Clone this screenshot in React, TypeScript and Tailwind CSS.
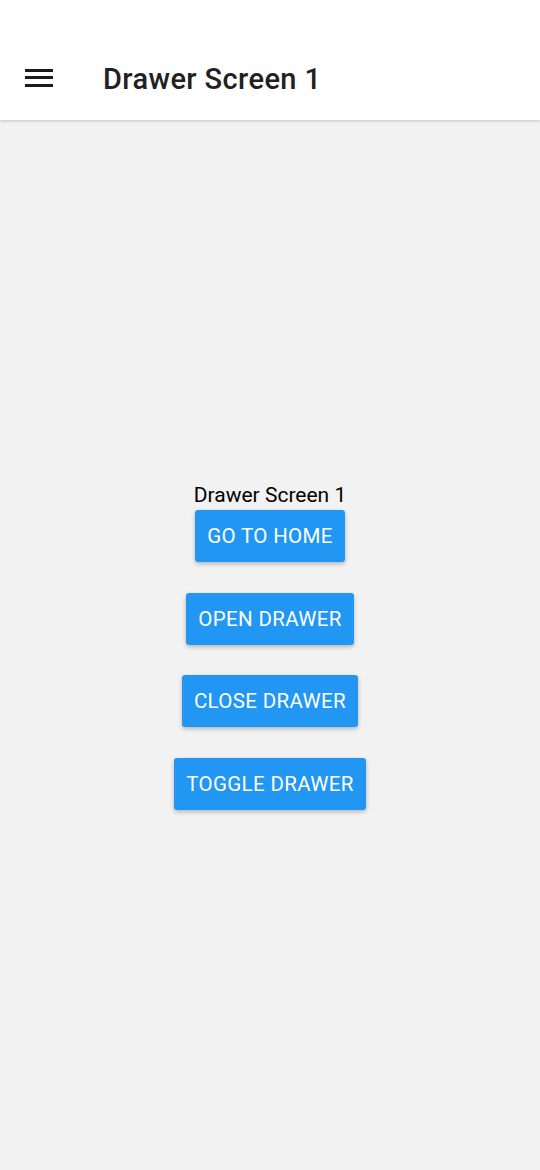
import React from "react";

function Btn({ label }: { label: string }) {
  return (
    <button className="h-[52px] px-[12px] bg-[#2196f3] text-white text-[20.5px] leading-[24px] rounded-[3px] shadow-[0_2px_4px_rgba(0,0,0,0.25)] tracking-[0.35px]">
      {label}
    </button>
  );
}

export default function App() {
  return (
    <div className="w-[540px] h-[1170px] bg-[#f2f2f2] flex flex-col" style={{ fontFamily: "Roboto, 'Noto Sans', sans-serif" }}>
      <div className="h-[120px] bg-white flex items-center shadow-[0_1px_3px_rgba(0,0,0,0.2)] relative z-10 pt-[39px]">
        <div className="w-[28px] ml-[25px] mb-[4px] flex flex-col gap-[4.5px]">
          <div className="h-[3px] bg-[#1a1a1a]" />
          <div className="h-[3px] bg-[#1a1a1a]" />
          <div className="h-[3px] bg-[#1a1a1a]" />
        </div>
        <div className="ml-[50px] text-[29px] tracking-[0.4px] font-medium text-[#212121]">Drawer Screen 1</div>
      </div>
      <div className="flex-1 flex flex-col items-center justify-center pt-[3px]">
        <div className="text-[21px] leading-[24px] text-black">Drawer Screen 1</div>
        <div className="mt-[3px] flex flex-col items-center gap-[30.5px]">
          <Btn label="GO TO HOME" />
          <Btn label="OPEN DRAWER" />
          <Btn label="CLOSE DRAWER" />
          <Btn label="TOGGLE DRAWER" />
        </div>
      </div>
    </div>
  );
}
